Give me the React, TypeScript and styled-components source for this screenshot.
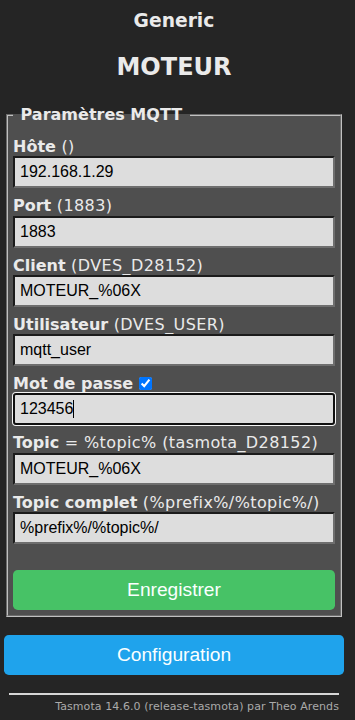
import React from "react";
import styled, { createGlobalStyle } from "styled-components";

const GlobalStyle = createGlobalStyle`
  html, body {
    margin: 0;
    padding: 0;
    background: #252525;
  }
  body {
    font-family: "DejaVu Sans", Verdana, sans-serif;
    font-size: 16px;
  }
`;

const Page = styled.div`
  width: 340px;
  margin-left: 4px;
  color: #eaeaea;
  text-align: left;
`;

const Header = styled.header`
  text-align: center;
  color: #eaeaea;
`;

const ModuleName = styled.h3`
  margin: 10px 0 0;
  font-size: 18.72px;
  line-height: 22px;
  font-weight: bold;
`;

const DeviceName = styled.h2`
  margin: 21px 0 0;
  font-size: 24px;
  line-height: 28px;
  font-weight: bold;
`;

const Panel = styled.fieldset`
  margin: 24px 2px 0;
  padding: 5px;
  background: #4f4f4f;
  border: 2px groove rgb(192, 192, 192);
  min-width: 0;
`;

const PanelLegend = styled.legend`
  padding: 0 2px;
  font-weight: bold;
  font-size: 16px;
  line-height: 19px;
`;

const Field = styled.p`
  margin: 8px 0;
  line-height: 19.3px;
`;

const FieldName = styled.b`
  font-weight: bold;
`;

const FieldHint = styled.span`
  letter-spacing: 0.4px;
`;

const InputWrap = styled.span<{ $caretAt?: number }>`
  display: block;
  position: relative;

  &::after {
    content: "";
    display: ${(p) => (p.$caretAt ? "block" : "none")};
    position: absolute;
    left: ${(p) => p.$caretAt ?? 0}px;
    top: 7px;
    width: 1px;
    height: 18px;
    background: #000;
  }
`;

const TextInput = styled.input<{ $focused?: boolean }>`
  display: block;
  width: 100%;
  box-sizing: border-box;
  margin: 0;
  padding: 5px;
  font-family: "Liberation Sans", Arial, sans-serif;
  font-size: 16px;
  line-height: normal;
  background: #dddddd;
  color: #000;
  outline: none;
  border-style: solid;
  border-width: 2px;
  border-color: ${(p) => (p.$focused ? "#101010" : "#1b1b1b #6e6e6e #6e6e6e #1b1b1b")};
  border-radius: ${(p) => (p.$focused ? "3px" : "0")};
  box-shadow: ${(p) => (p.$focused ? "0 0 0 1px #f4f4f4" : "none")};
`;

const RevealBox = styled.input`
  width: 13px;
  height: 13px;
  margin: 0 0 0 6px;
  vertical-align: -1px;
  accent-color: #0075ff;
`;

const ActionButton = styled.button<{ $tone: "green" | "blue"; $space: number }>`
  display: block;
  width: 100%;
  height: 40px;
  margin: ${(p) => p.$space}px 0 0;
  padding: 0;
  border: 0;
  border-radius: 0.3rem;
  background: ${(p) => (p.$tone === "green" ? "#47c266" : "#1fa3ec")};
  color: #faffff;
  font-family: "Liberation Sans", Arial, sans-serif;
  font-size: 19.2px;
  line-height: 40px;
  cursor: pointer;
`;

const Footer = styled.div`
  margin-top: 8px;
  padding: 5px;
  text-align: right;
  font-size: 11px;
`;

const Rule = styled.hr`
  margin: 5px 0;
  border: 0;
  height: 2px;
  background: #d6d6d6;
`;

const Credit = styled.a`
  color: #aaa;
  text-decoration: none;
  letter-spacing: 0.08px;
`;

type FieldDef = {
  name: string;
  hint: string;
  value: string;
};

const fields: FieldDef[] = [
  { name: "Hôte", hint: " ()", value: "192.168.1.29" },
  { name: "Port", hint: " (1883)", value: "1883" },
  { name: "Client", hint: " (DVES_D28152)", value: "MOTEUR_%06X" },
  { name: "Utilisateur", hint: " (DVES_USER)", value: "mqtt_user" },
];

const topicFields: FieldDef[] = [
  { name: "Topic", hint: " = %topic% (tasmota_D28152)", value: "MOTEUR_%06X" },
  { name: "Topic complet", hint: " (%prefix%/%topic%/)", value: "%prefix%/%topic%/" },
];

export default function App() {
  return (
    <>
      <GlobalStyle />
      <Page>
        <Header>
          <ModuleName>Generic</ModuleName>
          <DeviceName>MOTEUR</DeviceName>
        </Header>
        <Panel>
          <PanelLegend>{"\u00a0Paramètres MQTT\u00a0"}</PanelLegend>
          <form onSubmit={(e) => e.preventDefault()}>
            {fields.map((f) => (
              <Field key={f.name}>
                <FieldName>{f.name}</FieldName>
                <FieldHint>{f.hint}</FieldHint>
                <InputWrap>
                  <TextInput defaultValue={f.value} spellCheck={false} />
                </InputWrap>
              </Field>
            ))}
            <Field>
              <FieldName>Mot de passe</FieldName>
              <RevealBox type="checkbox" defaultChecked />
              <InputWrap $caretAt={60}>
                <TextInput $focused defaultValue="123456" spellCheck={false} />
              </InputWrap>
            </Field>
            {topicFields.map((f) => (
              <Field key={f.name}>
                <FieldName>{f.name}</FieldName>
                <FieldHint>{f.hint}</FieldHint>
                <InputWrap>
                  <TextInput defaultValue={f.value} spellCheck={false} />
                </InputWrap>
              </Field>
            ))}
            <ActionButton type="submit" $tone="green" $space={26}>
              Enregistrer
            </ActionButton>
          </form>
        </Panel>
        <ActionButton type="button" $tone="blue" $space={18}>
          Configuration
        </ActionButton>
        <Footer>
          <Rule />
          <Credit href="#">Tasmota 14.6.0 (release-tasmota) par Theo Arends</Credit>
        </Footer>
      </Page>
    </>
  );
}
